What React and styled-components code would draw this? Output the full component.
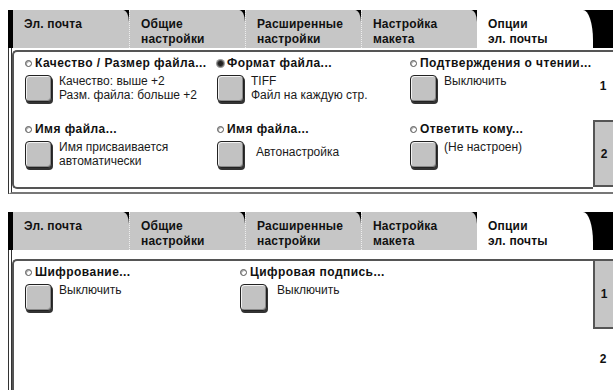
import React from 'react'
import styled, { createGlobalStyle, css } from 'styled-components'

const Global = createGlobalStyle`
  body {
    margin: 0;
    background: #fff;
    font-family: "Liberation Sans", Arial, sans-serif;
    color: #111;
  }
`

const gray = '#c6c6c6'

const Screen = styled.div`
  width: 613px;
  height: 390px;
  overflow: hidden;
  box-sizing: border-box;
  padding-top: 10px;
  display: flex;
  flex-direction: column;
  gap: 18px;
`

const Panel = styled.section`
  margin-left: 8px;
  display: flex;
  flex-direction: column;
  flex-shrink: 0;
`

const TabBar = styled.div`
  display: flex;
  height: 38px;
  background: #000;
  padding-left: 5px;
`

const Tab = styled.div`
  width: 116px;
  box-sizing: border-box;
  padding: 7px 0 0 11px;
  font-weight: bold;
  font-size: 12px;
  letter-spacing: 0.2px;
  line-height: 15px;
  color: #111;
  background: ${p => (p.$active ? '#fff' : gray)};
  border-top-right-radius: ${p => (p.$active ? '10px 30px' : '6px 12px')};
  border-left: ${p => (p.$first || p.$active ? 'none' : '1px dotted #efefef')};
`

const Body = styled.div`
  display: flex;
  height: ${p => p.$height}px;
  padding-top: ${p => p.$gap}px;
  border-left: 4px double #333;
  ${p => p.$closed && css`
    padding-bottom: 3px;
    border-bottom: 2px solid #777;
  `}
`

const Content = styled.div`
  flex: 1;
  box-sizing: border-box;
  border: 2px solid #555;
  border-right: none;
  border-bottom: ${p => (p.$closed ? '2px solid #555' : 'none')};
  border-radius: ${p => (p.$closed ? '5px 0 0 5px' : '5px 0 0 0')};
  padding: 4px 0 0 11px;
  display: grid;
  grid-template-columns: ${p => p.$cols};
  grid-auto-rows: 49px;
  row-gap: 17px;
  align-content: start;
`

const Item = styled.div`
  display: flex;
  flex-direction: column;
  gap: 5px;
`

const Heading = styled.div`
  display: flex;
  align-items: center;
  gap: 3px;
  font-weight: bold;
  font-size: 12px;
  letter-spacing: 0.45px;
  line-height: 14px;
  white-space: nowrap;
`

const Bullet = styled.span`
  width: 5px;
  height: 5px;
  flex-shrink: 0;
  border-radius: 50%;
  border: 1px solid #555;
  background: ${p => (p.$on ? '#222' : '#fff')};
  box-shadow: ${p => (p.$on ? '0 0 0 1px #999' : 'inset 1px 1px 0 #aaa')};
`

const Option = styled.div`
  display: flex;
  gap: ${p => p.$gap || 7}px;
`

const Button = styled.div`
  width: 27px;
  height: 27px;
  flex-shrink: 0;
  box-sizing: border-box;
  background: #c2c2c2;
  border: 1px solid #222;
  border-radius: 4px;
  box-shadow: inset 1px 1px 0 #f2f2f2, inset -1px -1px 0 #8a8a8a, 1px 2px 0 #333;
`

const Description = styled.div`
  font-size: 12px;
  line-height: 14px;
  color: #1a1a1a;
  white-space: nowrap;
  margin-top: -1px;
  padding: ${p => (p.$shift ? '5px 0 0 5px' : '0')};
`

const Pages = styled.div`
  width: 20px;
  display: flex;
  flex-direction: column;
`

const PageTab = styled.div`
  height: ${p => p.$h}px;
  box-sizing: border-box;
  display: flex;
  align-items: center;
  justify-content: center;
  font-weight: bold;
  font-size: 12px;
  ${p => (p.$active
    ? css`
      background: #fff;
      &:first-child { border-top: 2px solid #555; }
    `
    : css`
      background: ${gray};
      border: 2px solid #555;
      border-right: none;
    `)}
`

const tabs = [
  ['Эл. почта'],
  ['Общие', 'настройки'],
  ['Расширенные', 'настройки'],
  ['Настройка', 'макета'],
  ['Опции', 'эл. почты'],
]

function Tabs() {
  return (
    <TabBar>
      {tabs.map((lines, i) => (
        <Tab key={i} $first={i === 0} $active={i === 4}>
          {lines.map(l => <div key={l}>{l}</div>)}
        </Tab>
      ))}
    </TabBar>
  )
}

function Setting({ title, lines, on, shift, gap }) {
  return (
    <Item>
      <Heading><Bullet $on={on} />{title}</Heading>
      <Option $gap={gap}>
        <Button />
        <Description $shift={shift}>
          {lines.map(l => <div key={l}>{l}</div>)}
        </Description>
      </Option>
    </Item>
  )
}

const firstPage = [
  { title: 'Качество / Размер файла...', lines: ['Качество: выше +2', 'Разм. файла: больше +2'] },
  { title: 'Формат файла...', lines: ['TIFF', 'Файл на каждую стр.'], on: true },
  { title: 'Подтверждения о чтении...', lines: ['Выключить'] },
  { title: 'Имя файла...', lines: ['Имя присваивается', 'автоматически'] },
  { title: 'Имя файла...', lines: ['Автонастройка'], shift: true },
  { title: 'Ответить кому...', lines: ['(Не настроен)'] },
]

const secondPage = [
  { title: 'Шифрование...', lines: ['Выключить'] },
  { title: 'Цифровая подпись...', lines: ['Выключить'], gap: 10 },
]

export default function App() {
  return (
    <>
      <Global />
      <Screen>
        <Panel>
          <Tabs />
          <Body $height={139} $gap={2} $closed>
            <Content $cols="192px 193px 180px" $closed>
              {firstPage.map((s, i) => <Setting key={i} {...s} />)}
            </Content>
            <Pages>
              <PageTab $h={70} $active>1</PageTab>
              <PageTab $h={67}>2</PageTab>
            </Pages>
          </Body>
        </Panel>
        <Panel>
          <Tabs />
          <Body $height={150} $gap={9}>
            <Content $cols="215px 215px">
              {secondPage.map((s, i) => <Setting key={i} {...s} />)}
            </Content>
            <Pages>
              <PageTab $h={70}>1</PageTab>
              <PageTab $h={60} $active>2</PageTab>
            </Pages>
          </Body>
        </Panel>
      </Screen>
    </>
  )
}
